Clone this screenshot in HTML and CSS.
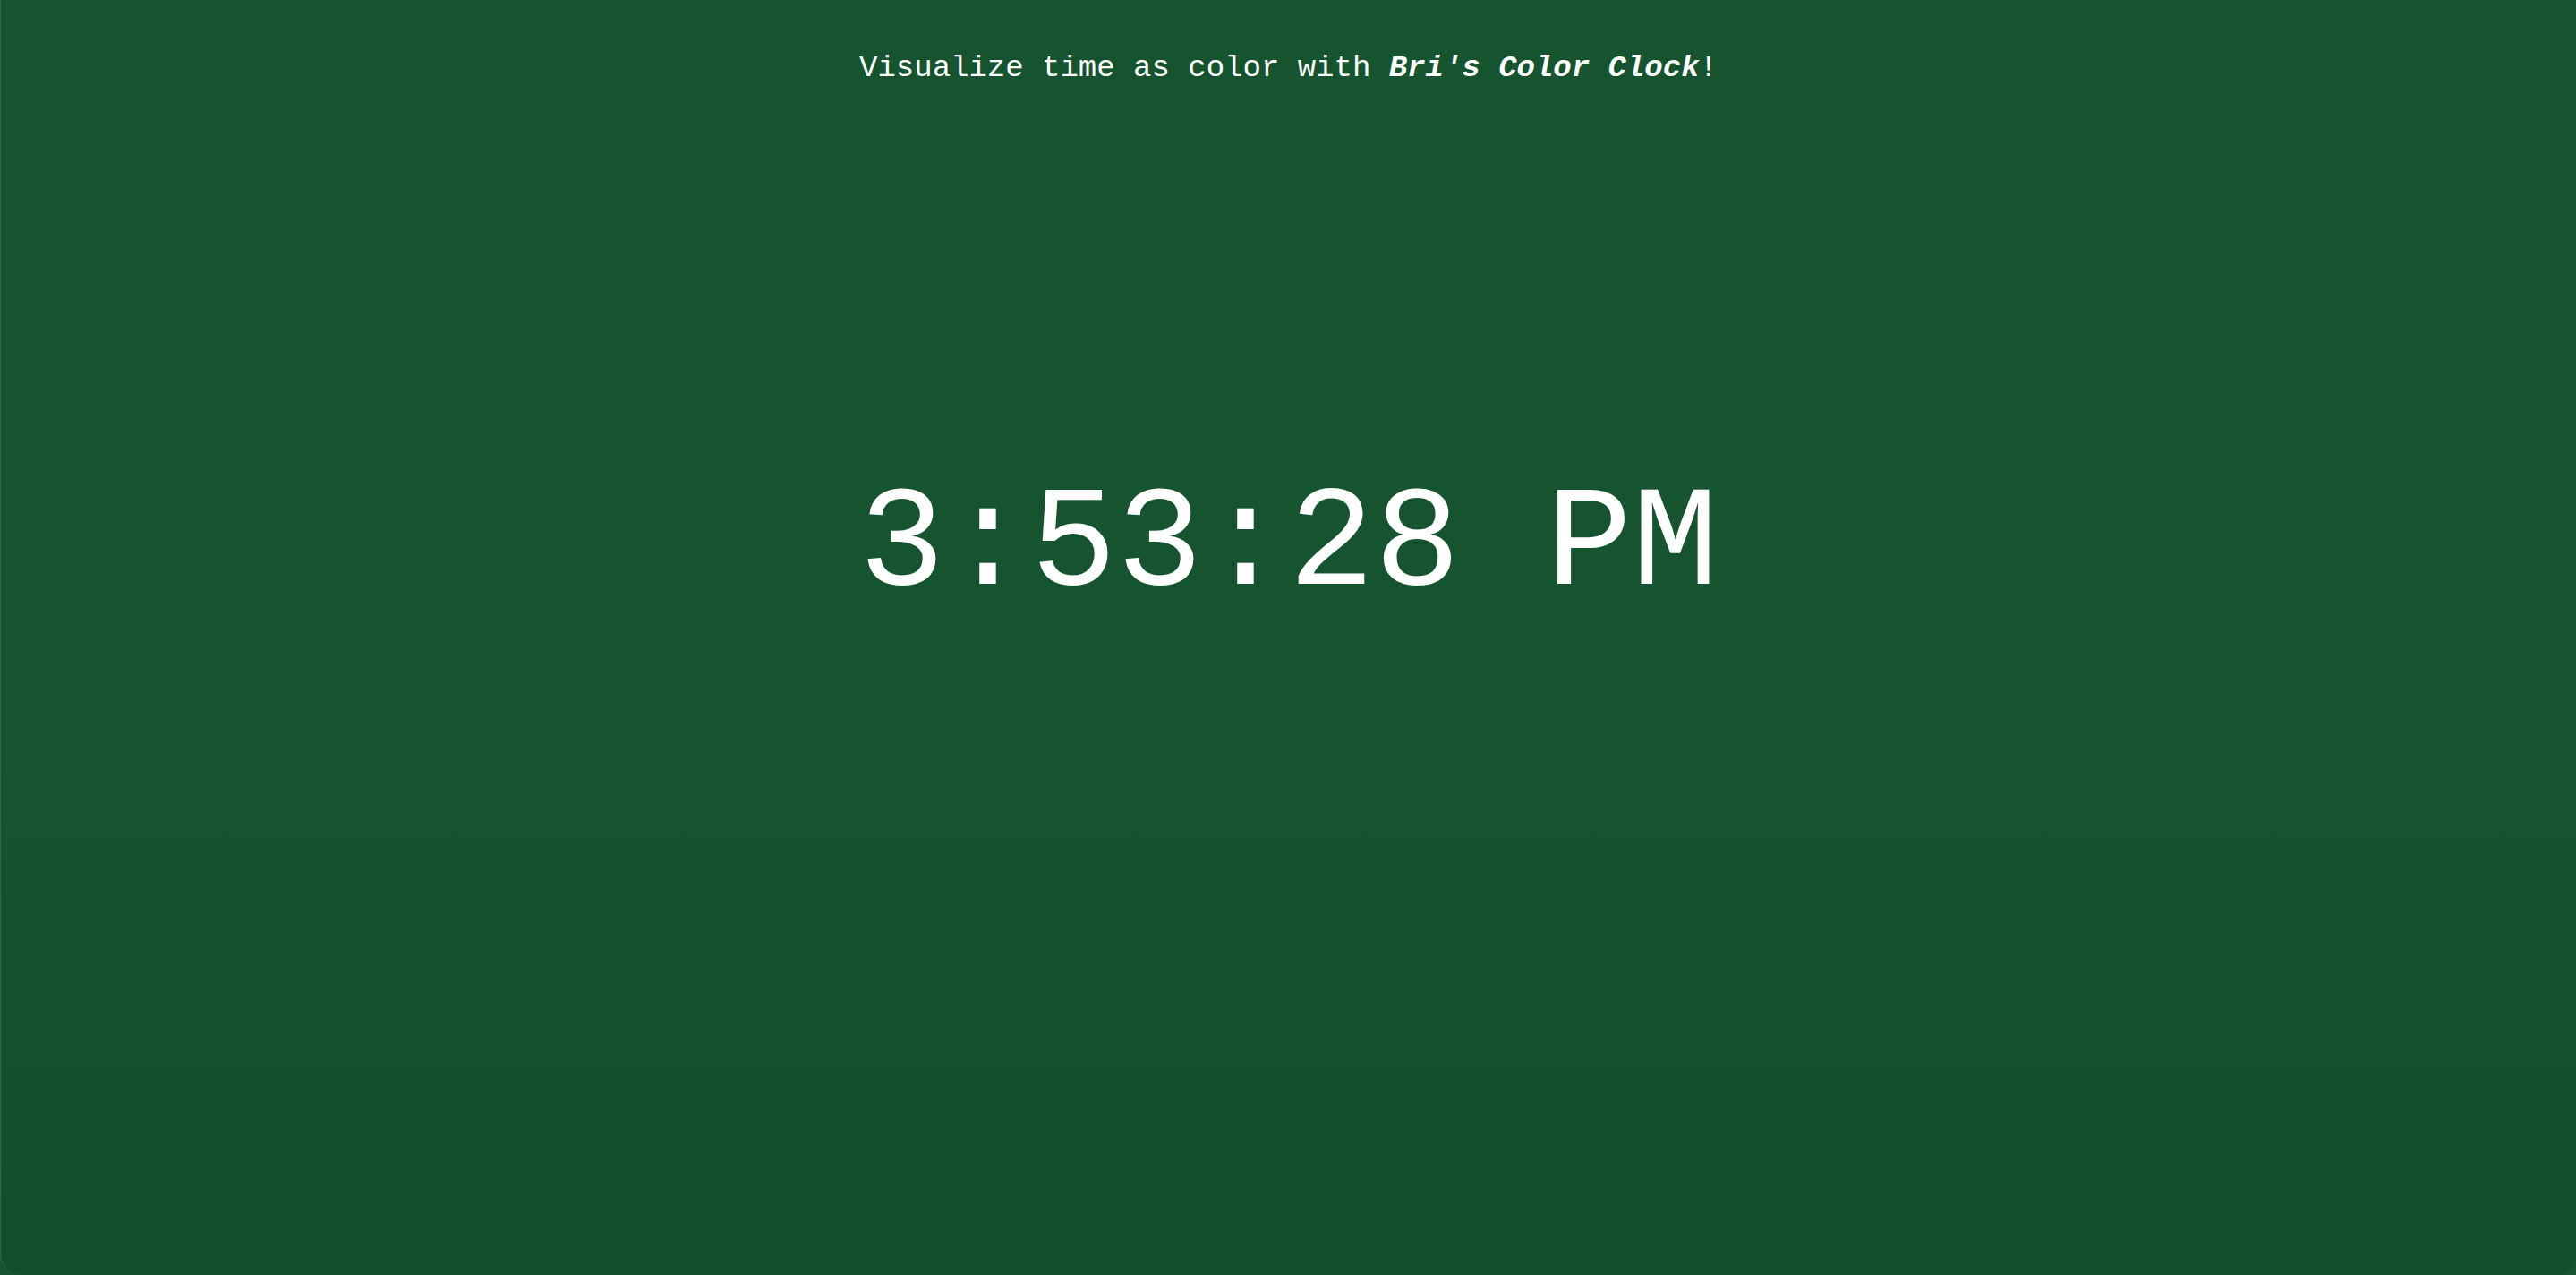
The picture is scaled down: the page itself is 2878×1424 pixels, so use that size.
FILE: index.html
```html
<!DOCTYPE html>
<html lang="en">
<head>
<meta charset="utf-8">
<title>Bri's Color Clock</title>
<link rel="stylesheet" href="styles.css">
</head>
<body>
<main class="page">
  <header class="tagline">Visualize time as color with <strong class="brand">Bri's Color Clock</strong>!</header>
  <section class="clock-area">
    <div class="clock">3:53:28 PM</div>
  </section>
</main>
</body>
</html>
```
FILE: styles.css
```css
html, body {
  margin: 0;
  padding: 0;
  height: 100%;
  background: #15542f;
}
.page {
  box-sizing: border-box;
  height: 100vh;
  display: flex;
  flex-direction: column;
  align-items: center;
  color: #ffffff;
  font-family: "Courier New", "Nimbus Mono PS", "Nimbus Mono L", "FreeMono", Courier, "Liberation Mono", monospace;
  background: linear-gradient(to bottom, #15542f 0%, #15542f 60%, #134e2b 100%);
  border-left: 1px solid #2a6a44;
  border-radius: 0 0 24px 24px;
}
.tagline {
  margin-top: 56px;
  font-size: 34px;
  line-height: 40px;
}
.brand {
  font-style: italic;
  font-weight: bold;
}
.clock-area {
  margin-top: 424px;
}
.clock {
  font-size: 160px;
  line-height: 180px;
}
```
